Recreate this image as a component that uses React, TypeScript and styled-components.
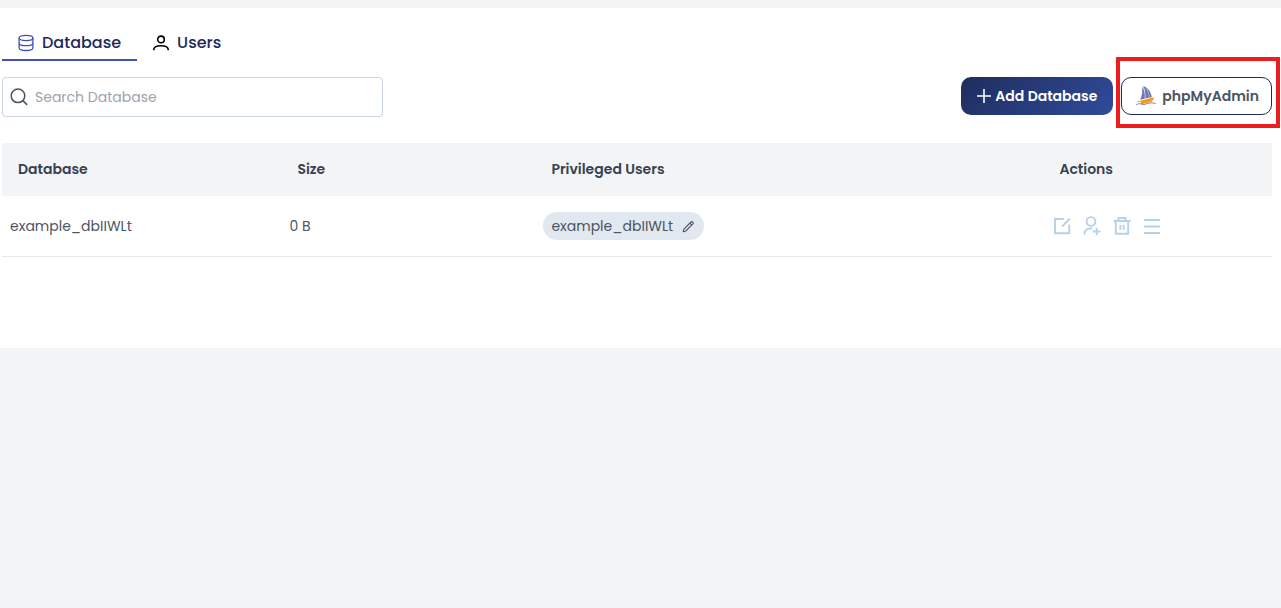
import React from "react";
import styled, { createGlobalStyle } from "styled-components";

const GlobalStyle = createGlobalStyle`
  *, *::before, *::after { box-sizing: border-box; }
  body {
    margin: 0;
    background: #f3f4f6;
    color: #4b5563;
    font-family: Poppins, Inter, "Open Sans", sans-serif;
    font-size: 14px;
    line-height: 20px;
  }
  button, input { font: inherit; color: inherit; }
`;

const Panel = styled.main`
  margin-top: 8px;
  min-height: 340px;
  padding: 16px 9px 16px 2px;
  background: #fff;
`;

const Tabs = styled.div`
  display: flex;
`;

const Tab = styled.button<{ $active?: boolean }>`
  display: flex;
  align-items: center;
  gap: 8px;
  height: 37px;
  padding: 2px 16px 0;
  border: 0;
  border-bottom: 2px solid ${(p) => (p.$active ? "#3f51b5" : "transparent")};
  background: none;
  color: #1e2b5c;
  font-size: 16px;
  font-weight: 500;
  cursor: pointer;

  svg { color: ${(p) => (p.$active ? "#3f51b5" : "#000")}; }
`;

const Toolbar = styled.div`
  display: flex;
  justify-content: space-between;
  align-items: flex-start;
  margin: 16px 0 26px;
`;

const SearchBox = styled.label`
  display: flex;
  align-items: center;
  gap: 7px;
  width: 30%;
  height: 40px;
  padding: 0 7px;
  border: 1px solid #cbd5e1;
  border-radius: 4px;
`;

const SearchInput = styled.input`
  flex: 1;
  min-width: 0;
  padding: 0;
  border: 0;
  outline: 0;
  background: none;

  &::placeholder { color: #9ca3af; opacity: 1; }
`;

const ButtonGroup = styled.div`
  display: flex;
  gap: 8px;
`;

const Button = styled.button<{ $primary?: boolean }>`
  display: flex;
  align-items: center;
  justify-content: center;
  gap: ${(p) => (p.$primary ? 4 : 6)}px;
  height: 38px;
  padding: ${(p) => (p.$primary ? "0 16px" : "0 12px 0 14px")};
  border: ${(p) => (p.$primary ? "0" : "1px solid #1e2b5c")};
  border-radius: 10px;
  background: ${(p) => (p.$primary ? "linear-gradient(135deg, #1f2d5c, #304b9b)" : "#fff")};
  color: ${(p) => (p.$primary ? "#fff" : "#4b5563")};
  font-weight: 600;
  white-space: nowrap;
  cursor: pointer;
`;

const Highlight = styled.div`
  position: relative;

  &::after {
    content: "";
    position: absolute;
    inset: -20px -8px -13px -5px;
    border: 4px solid #ec1c1f;
    pointer-events: none;
  }
`;

const Table = styled.table`
  width: 100%;
  table-layout: fixed;
  border-collapse: separate;
  border-spacing: 0;
`;

const HeadCell = styled.th<{ $width: number }>`
  width: ${(p) => p.$width}%;
  height: 53px;
  padding: 0 16px 2px;
  background: #f3f4f6;
  color: #374151;
  font-weight: 600;
  text-align: left;
`;

const Cell = styled.td`
  height: 61px;
  padding: 0 8px;
  border-bottom: 1px solid #e5e7eb;
`;

const UserChip = styled.button`
  display: flex;
  align-items: center;
  gap: 8px;
  height: 28px;
  padding: 0 8px;
  border: 0;
  border-radius: 14px;
  background: #e2e8f0;
  cursor: pointer;
`;

const Actions = styled.div`
  display: flex;
  gap: 10px;
  padding-left: 1px;
`;

const IconButton = styled.button`
  display: flex;
  padding: 0;
  border: 0;
  background: none;
  color: #b7d1ea;
  cursor: pointer;
`;

const Icon = styled.svg.attrs({ "aria-hidden": true })`
  display: block;
  flex: none;
  fill: none;
  stroke: currentColor;
`;

const Logo = styled.svg.attrs({ "aria-hidden": true })`
  display: block;
  flex: none;
`;

const DatabaseIcon = () => (
  <Icon width="16" height="18" viewBox="0 0 16 18" strokeWidth="1.3">
    <ellipse cx="8" cy="4" rx="6.9" ry="2.6" />
    <path d="M1.1 4v9.800c0 1.500 3.100 2.700 6.900 2.700s6.900-1.200 6.900-2.700V4M1.100 8.900c0 1.500 3.100 2.700 6.900 2.700s6.900-1.200 6.900-2.700" />
  </Icon>
);

const UserIcon = () => (
  <Icon width="16" height="16" viewBox="0 0 16 16" strokeWidth="1.6">
    <circle cx="8" cy="4.4" r="3.3" />
    <path d="M.8 15.2v-.6c0-2.200 2.800-3.900 7.200-3.900s7.200 1.700 7.200 3.900v.6" />
  </Icon>
);

const SearchIcon = () => (
  <Icon width="18" height="18" viewBox="0 0 18 18" strokeWidth="1.500">
    <circle cx="8" cy="7.800" r="6.800" />
    <path d="m12.800 12.600 4.400 4.300" />
  </Icon>
);

const PlusIcon = () => (
  <Icon width="14" height="14" viewBox="0 0 14 14" strokeWidth="1.6">
    <path d="M7 0v14M0 7h14" />
  </Icon>
);

const SailboatIcon = () => (
  <Logo width="20" height="20" viewBox="0 0 20 20">
    <path fill="#6c78af" d="M6 .7c2.600 2.700 3.200 7.300 2.700 12l-4.500 1C6.200 9.500 6.700 5 6 .7zM6.900 0c4.700 1.300 7.900 5.500 9 11.200l-6.600 1.400C9.800 7.600 9 3.200 6.900 0z" />
    <path fill="none" stroke="#fff" strokeWidth=".4" d="M9.500 1.600c2.500 2.500 3.600 6 3.800 10.200" />
    <path fill="#f89c0e" d="m3.300 14.900 14-3.400.8.600-1.900 3.400-10.900 2.900-.6-2.500z" />
    <path fill="none" stroke="#6c78af" strokeWidth=".9" d="M.2 18.700c2.300-1.400 4.200-1.100 6.100-.4 2.300.8 4-.7 6.700-1.200 2.700-.6 4.800-.2 6.900.7" />
    <path fill="#6c78af" d="M.5 15.700c1.300-.5 2.400-.5 3.600-.2l.2.500c-1.400-.4-2.500-.4-3.800-.3z" />
  </Logo>
);

const PencilIcon = () => (
  <Icon width="15" height="15" viewBox="0 0 15 15" strokeWidth="1.1" strokeLinejoin="round">
    <path d="M2.200 12.800 2.900 10.200 10 3c.5-.5 1.100-.5 1.600 0l.3.300c.5.500.5 1.100 0 1.600L4.800 12zM8.900 4.200l1.900 1.900" />
  </Icon>
);

const EditIcon = () => (
  <Icon width="20" height="20" viewBox="0 0 20 20" strokeWidth="1.9">
    <path d="M12 3H3v14.300h14.200V8.500M10 10.500l8-8" />
  </Icon>
);

const AddUserIcon = () => (
  <Icon width="20" height="20" viewBox="0 0 20 20" strokeWidth="1.9">
    <circle cx="9" cy="5.500" r="4.400" />
    <path d="M2.500 18.600v-1.100c0-3 2.400-5 5.300-5H10M10.800 15.500h7.700M14.700 11.800v7.400" />
  </Icon>
);

const TrashIcon = () => (
  <Icon width="20" height="20" viewBox="0 0 20 20" strokeWidth="1.900">
    <path d="M1.500 5h17M6.500 5V2h7v3M3.800 5v12.800h12.400V5M8.300 9v4.800M11.700 9v4.800" />
  </Icon>
);

const MenuIcon = () => (
  <Icon width="20" height="20" viewBox="0 0 20 20" strokeWidth="1.900">
    <path d="M2 4h16M2 10.500h16M2 17h16" />
  </Icon>
);

const columns = [
  { label: "Database", width: 22 },
  { label: "Size", width: 20 },
  { label: "Privileged Users", width: 40 },
  { label: "Actions", width: 18 },
];

const databases = [{ name: "example_dbIIWLt", size: "0 B", user: "example_dbIIWLt" }];

const rowActions = [
  { label: "Edit database", icon: <EditIcon /> },
  { label: "Add user", icon: <AddUserIcon /> },
  { label: "Delete database", icon: <TrashIcon /> },
  { label: "More actions", icon: <MenuIcon /> },
];

export default function App() {
  return (
    <>
      <GlobalStyle />
      <Panel>
        <Tabs role="tablist">
          <Tab role="tab" aria-selected="true" $active><DatabaseIcon />Database</Tab>
          <Tab role="tab" aria-selected="false"><UserIcon />Users</Tab>
        </Tabs>
        <Toolbar>
          <SearchBox>
            <SearchIcon />
            <SearchInput type="text" aria-label="Search Database" placeholder="Search Database" />
          </SearchBox>
          <ButtonGroup>
            <Button $primary><PlusIcon />Add Database</Button>
            <Highlight>
              <Button><SailboatIcon />phpMyAdmin</Button>
            </Highlight>
          </ButtonGroup>
        </Toolbar>
        <Table>
          <thead>
            <tr>
              {columns.map((c) => (
                <HeadCell key={c.label} scope="col" $width={c.width}>{c.label}</HeadCell>
              ))}
            </tr>
          </thead>
          <tbody>
            {databases.map((db) => (
              <tr key={db.name}>
                <Cell>{db.name}</Cell>
                <Cell>{db.size}</Cell>
                <Cell><UserChip>{db.user}<PencilIcon /></UserChip></Cell>
                <Cell>
                  <Actions>
                    {rowActions.map((a) => (
                      <IconButton key={a.label} aria-label={a.label}>{a.icon}</IconButton>
                    ))}
                  </Actions>
                </Cell>
              </tr>
            ))}
          </tbody>
        </Table>
      </Panel>
    </>
  );
}
